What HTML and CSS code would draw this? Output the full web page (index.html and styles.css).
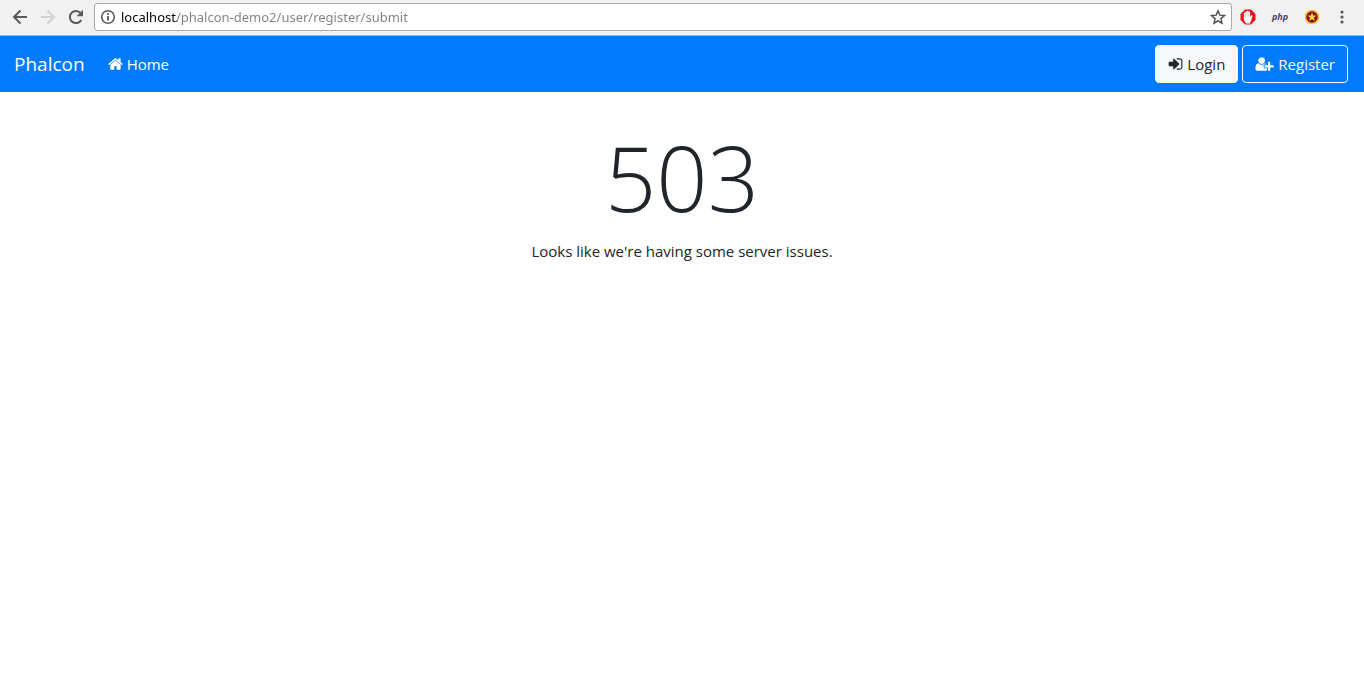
FILE: index.html
```html
<!DOCTYPE html>
<html lang="en">
<head>
<meta charset="utf-8">
<meta name="viewport" content="width=device-width, initial-scale=1">
<title>Phalcon</title>
<link rel="stylesheet" href="styles.css">
</head>
<body>
<header class="toolbar">
  <button class="tool" aria-label="Back"><svg width="16" height="16" viewBox="0 0 16 16"><path d="M15 8H2M8.500 1.500L2 8l6.500 6.500" fill="none" stroke="#5a5a5a" stroke-width="2"/></svg></button>
  <button class="tool" aria-label="Forward" disabled><svg width="16" height="16" viewBox="0 0 16 16"><path d="M1 8h13M7.500 1.500L14 8l-6.500 6.500" fill="none" stroke="#d2d2d2" stroke-width="2"/></svg></button>
  <button class="tool" aria-label="Reload"><svg width="16" height="16" viewBox="0 0 16 16"><path d="M13.300 11A6.100 6.100 0 1 1 12.600 4" fill="none" stroke="#5a5a5a" stroke-width="2"/><path d="M15 .8v6.400H8.600z" fill="#5a5a5a"/></svg></button>
  <form class="address">
    <svg width="16" height="16" viewBox="0 0 16 16"><circle cx="8" cy="8" r="6.300" fill="none" stroke="#5a5a5a" stroke-width="1.600"/><path d="M7.100 7h1.800v4.500H7.100zM7.100 4.200h1.800v1.700H7.100z" fill="#5a5a5a"/></svg>
    <input class="url" type="text" aria-label="Address" value="localhost/phalcon-demo2/user/register/submit">
    <button class="tool" type="button" aria-label="Bookmark"><svg width="16" height="16" viewBox="0 0 16 16"><path d="M8 1.800l1.800 4.300 4.700.4-3.600 3.100 1.100 4.600L8 11.800l-4 2.400 1.100-4.600L1.500 6.500l4.700-.4z" fill="none" stroke="#4c4c4c" stroke-width="1.400"/></svg></button>
  </form>
  <div class="extensions">
    <button class="tool" aria-label="Ad blocker"><svg width="16" height="16" viewBox="0 0 16 16"><path d="M5 .5h6L15.500 5v6L11 15.500H5L.5 11V5z" fill="#e3141b"/><path d="M3.800 8V4q.8-.9 1.500 0V2.800q.8-1 1.500 0v-.6q.9-1 1.700 0v.6q.9-.9 1.600 0V8l1-1.500q1.200-.6 1.600.3L10.900 12l-1 2.400H6.100Q3.800 12.500 3.800 10z" fill="#fff"/><path d="M5.300 4.300V8M6.900 3v4.500M8.500 3v4.500" stroke="#ee9ca0" stroke-width=".4"/></svg></button>
    <button class="tool php" aria-label="php">php</button>
    <button class="tool" aria-label="Star extension"><svg width="16" height="16" viewBox="0 0 16 16"><circle cx="8" cy="8" r="6.500" fill="#8b0c12" stroke="#f5c431" stroke-width="1.500"/><path d="M8 3.200l1.200 3.200 3.400.2-2.700 2.200.9 3.300L8 10.300l-2.800 1.800.9-3.300-2.700-2.200 3.400-.2z" fill="#f5cf45"/></svg></button>
    <button class="tool" aria-label="Menu"><svg width="16" height="16" viewBox="0 0 16 16"><g fill="#5a5a5a"><circle cx="8" cy="3" r="1.600"/><circle cx="8" cy="8" r="1.600"/><circle cx="8" cy="13" r="1.600"/></g></svg></button>
  </div>
</header>
<nav class="navbar">
  <a class="brand" href="#">Phalcon</a>
  <a class="link" href="#"><svg class="icon" width="15" height="16" viewBox="0 0 1664 1792"><path d="M1408 992v480q0 26-19 45t-45 19h-384v-384h-256v384h-384q-26 0-45-19t-19-45v-480q0-1 .5-3t.5-3l575-474 575 474q1 2 1 6zm223-69l-62 74q-8 9-21 11h-3q-13 0-21-7l-692-577-692 577q-12 8-24 7-13-2-21-11l-62-74q-8-10-7-23.500t11-21.500l719-599q32-26 76-26t76 26l244 204v-195q0-14 9-23t23-9h192q14 0 23 9t9 23v408l219 182q10 8 11 21.500t-7 23.500z"/></svg>Home</a>
  <div class="actions">
    <a class="btn btn-light" href="#"><svg class="icon" width="15" height="16" viewBox="64 0 1664 1792"><path d="M1312 896q0 26-19 45l-544 544q-19 19-45 19t-45-19-19-45v-288h-448q-26 0-45-19t-19-45v-384q0-26 19-45t45-19h448v-288q0-26 19-45t45-19 45 19l544 544q19 19 19 45zm352-352v704q0 119-84.500 203.500t-203.500 84.500h-320q-13 0-22.500-9.500t-9.500-22.500q0-4-1-20t-.5-26.500 3-23.500 10-19.500 20.500-6.500h320q66 0 113-47t47-113v-704q0-66-47-113t-113-47h-312l-11.500-1-11.500-3-8-5.500-7-9-2-13.500q0-4-1-20t-.5-26.500 3-23.500 10-19.500 20.500-6.500h320q119 0 203.500 84.500t84.500 203.500z"/></svg>Login</a>
    <a class="btn btn-outline" href="#"><svg class="icon" width="19" height="16" viewBox="0 0 2048 1792"><path d="M704 896q-159 0-271.500-112.500t-112.500-271.500 112.500-271.500 271.500-112.500 271.500 112.500 112.500 271.500-112.500 271.500-271.500 112.500zm960 128h352q13 0 22.500 9.500t9.500 22.500v192q0 13-9.500 22.500t-22.500 9.500h-352v352q0 13-9.500 22.500t-22.500 9.500h-192q-13 0-22.500-9.500t-9.500-22.500v-352h-352q-13 0-22.500-9.500t-9.500-22.500v-192q0-13 9.500-22.500t22.500-9.500h352v-352q0-13 9.500-22.500t22.500-9.500h192q13 0 22.500 9.500t9.500 22.500v352zm-736 224q0 52 38 90t90 38h256v238q-68 50-171 50h-874q-121 0-194-69t-73-190q0-53 3.500-103.500t14-109 26.500-108.500 43-97.500 62-81 85.500-53.500 111.500-20q19 0 39 17 79 61 154.500 91.500t164.500 30.500 164.500-30.500 154.500-91.500q20-17 39-17 132 0 217 96h-223q-52 0-90 38t-38 90v192z"/></svg>Register</a>
  </div>
</nav>
<main class="message">
  <h1 class="code">503</h1>
  <p class="detail">Looks like we're having some server issues.</p>
</main>
</body>
</html>
```
FILE: styles.css
```css
* { box-sizing: border-box; }
body {
  margin: 0;
  background: #fff;
  color: #212529;
  font: 400 15px/24px "Open Sans", "Noto Sans", sans-serif;
}
a { color: inherit; text-decoration: none; }
.toolbar {
  display: flex;
  align-items: center;
  gap: 12px;
  height: 36px;
  padding: 0 14px 2px 12px;
  background: #f1f1f1;
  border-bottom: 1px solid #b3b3b3;
}
.tool {
  display: flex;
  align-items: center;
  justify-content: center;
  flex: none;
  width: 16px;
  height: 16px;
  padding: 0;
  border: 0;
  background: none;
}
.address {
  display: flex;
  align-items: center;
  flex: 1;
  gap: 5px;
  height: 28px;
  margin: 0 -4px 0 -2px;
  padding: 0 5px;
  background: #fff;
  border: 1px solid #a9a9a9;
  border-radius: 3px;
}
.url {
  flex: 1;
  min-width: 0;
  padding: 0;
  border: 0;
  outline: 0;
  font: 400 13px/20px "Noto Sans", "Open Sans", sans-serif;
  color: transparent;
  /* host name in black, the path in grey */
  background: linear-gradient(to right, #000 56px, #808080 56px);
  -webkit-background-clip: text;
  background-clip: text;
}
.extensions { display: flex; align-items: center; gap: 16px; }
.extensions .tool:last-child { margin-left: -2px; }
.php {
  color: #3c4678;
  font: italic 700 9px/16px "Open Sans", "Noto Sans", sans-serif;
}
.navbar {
  display: flex;
  align-items: center;
  height: 56px;
  padding: 0 16px 0 14px;
  background: #007bff;
  color: #fff;
}
.brand { margin-right: 23px; font-size: 19px; line-height: 30px; }
.link, .btn { display: flex; align-items: center; gap: 4px; }
.icon { flex: none; fill: currentColor; }
.actions { display: flex; gap: 4px; margin-left: auto; }
.btn {
  height: 38px;
  padding: 0 12px;
  border: 1px solid #f8f9fa;
  border-radius: 4px;
}
.btn-light { background: #f8f9fa; color: #212529; }
.btn-outline { color: #f8f9fa; }
.message { padding: 32px 16px; text-align: center; }
.code {
  margin: 0 0 8px;
  font-size: 90px;
  font-weight: 300;
  line-height: 107px;
}
.detail { margin: 0; }
```
